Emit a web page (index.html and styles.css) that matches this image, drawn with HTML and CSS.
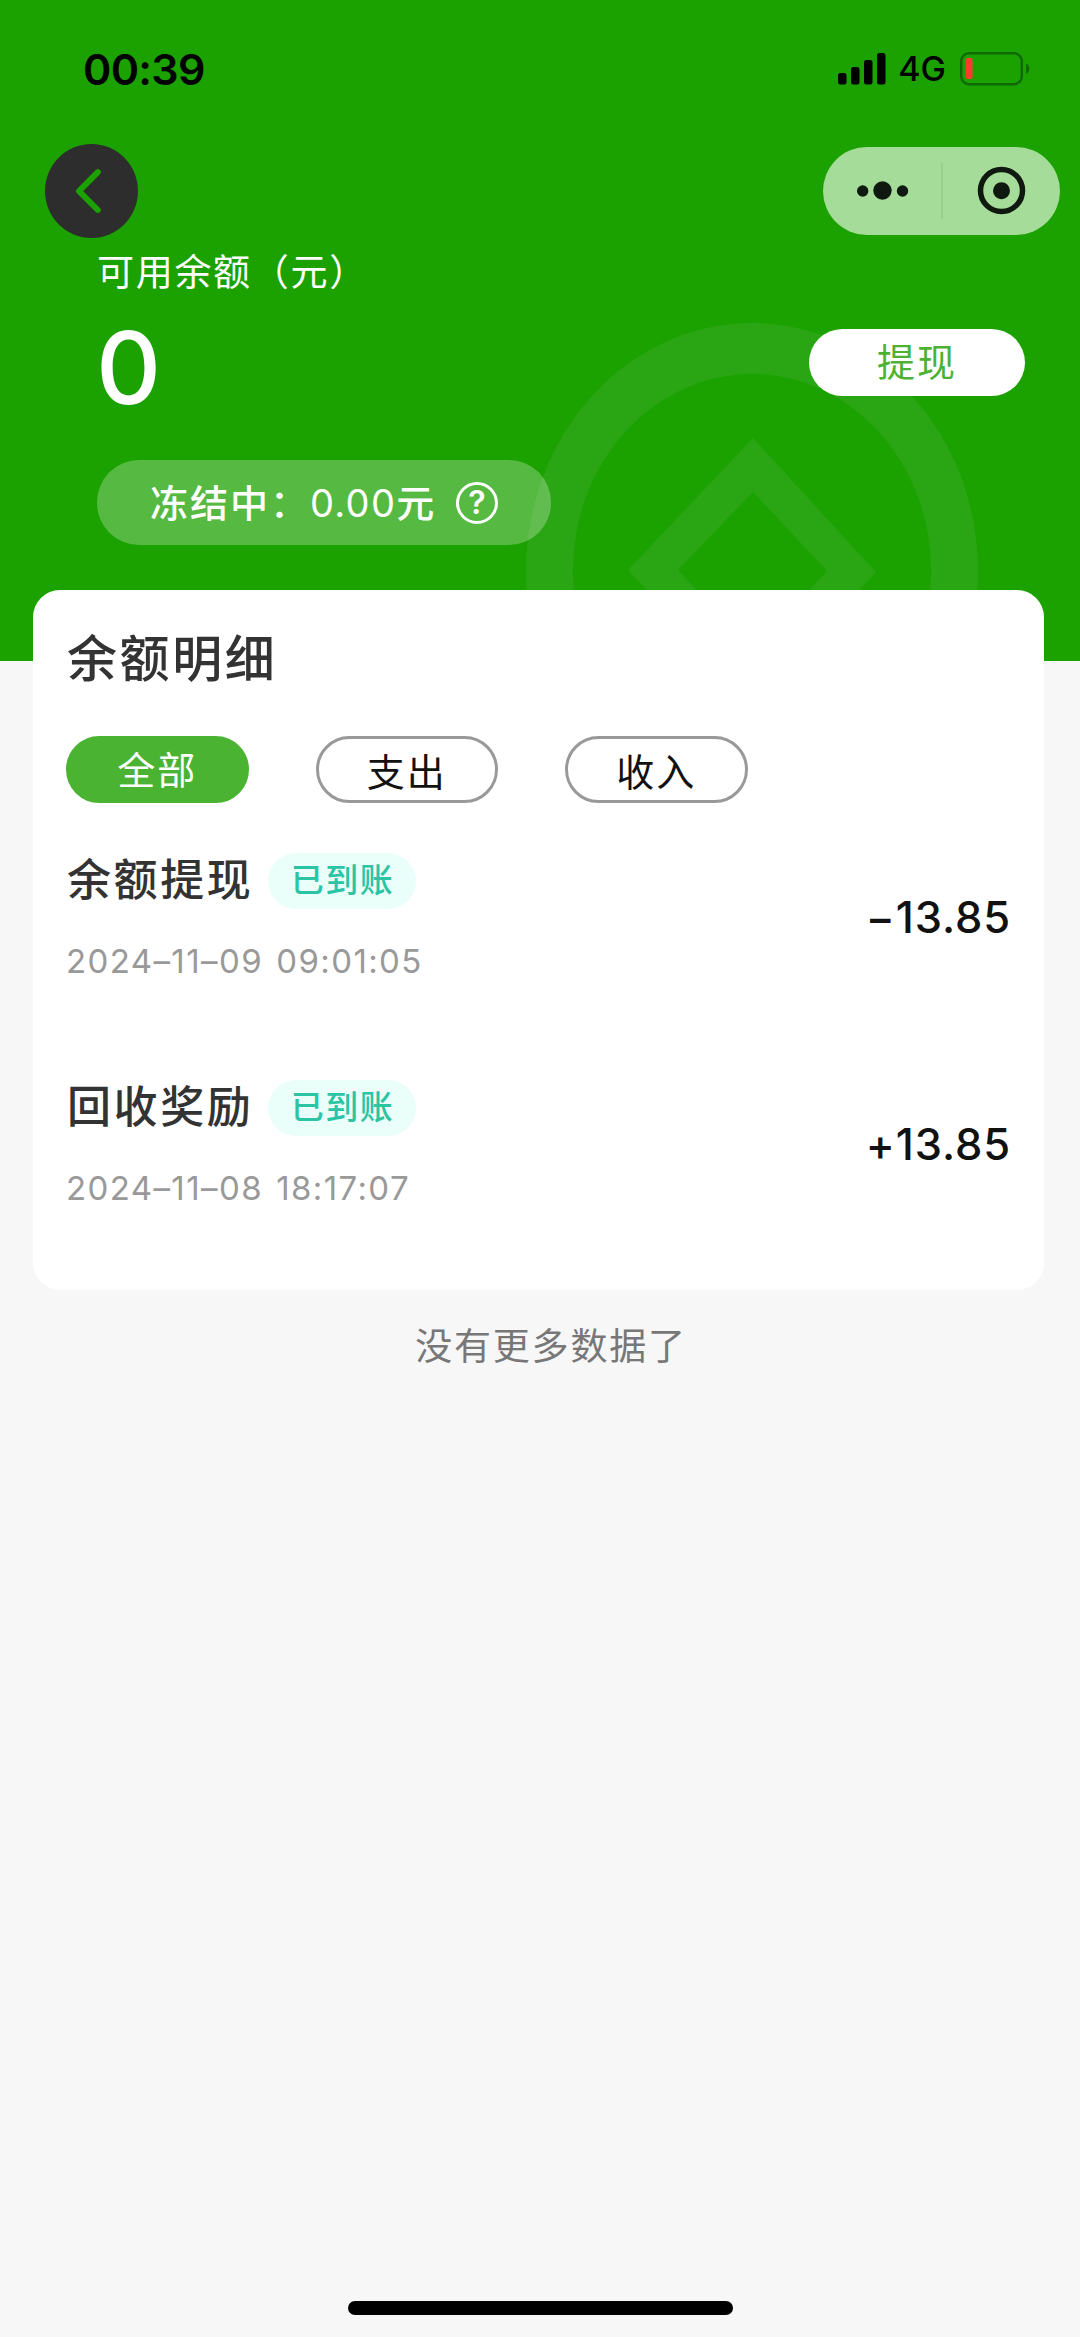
FILE: index.html
```html
<!DOCTYPE html>
<html lang="zh-CN">
<head>
<meta charset="utf-8">
<title>余额明细</title>
<link rel="stylesheet" href="styles.css">
</head>
<body>
<div class="screen">
  <header class="hero">
    <svg class="hero-coin" viewBox="0 0 454 339" aria-hidden="true">
      <path fill-rule="evenodd" d="M1 249a226 248 0 1 1 452 0a226 248 0 1 1 -452 0ZM48 249a179 197 0 1 0 358 0a179 197 0 1 0 -358 0Z"/>
      <path fill-rule="evenodd" d="M228 116L351 250L228 383L103 248ZM228 170L302 249L228 328L153 248Z"/>
    </svg>
    <div class="status-bar">
      <span class="clock">00:39</span>
      <div class="status-icons">
        <svg class="signal" width="48" height="32" viewBox="0 0 48 32" aria-hidden="true">
          <rect x="0" y="20" width="8.5" height="11.5" rx="2.5"/>
          <rect x="13" y="14" width="8.5" height="17.5" rx="2.5"/>
          <rect x="26" y="7" width="8.5" height="24.5" rx="2.5"/>
          <rect x="39" y="0" width="8.5" height="31.5" rx="2.5"/>
        </svg>
        <span class="network">4G</span>
        <svg class="battery" width="70" height="34" viewBox="0 0 70 34" aria-hidden="true">
          <rect class="battery-shell" x="1.2" y="1.2" width="60.6" height="31" rx="8"/>
          <rect class="battery-level" x="5.5" y="6" width="7" height="21" rx="2"/>
          <path class="battery-cap" d="M66 11.5C70.5 13.5 70.5 20 66 22Z"/>
        </svg>
      </div>
    </div>
    <div class="nav-bar">
      <div class="back">
        <svg width="93" height="94" viewBox="0 0 93 94" aria-hidden="true"><path d="M52.8 28.2L34 47.2L52.8 66"/></svg>
      </div>
      <div class="capsule">
        <svg width="237" height="88" viewBox="0 0 237 88" aria-hidden="true">
          <circle cx="39.7" cy="44" r="5.7"/>
          <circle cx="59.5" cy="43.5" r="9.2"/>
          <circle cx="79.5" cy="44" r="5.7"/>
          <path class="capsule-divider" d="M119 16V72"/>
          <circle class="capsule-ring" cx="178.5" cy="43.5" r="21"/>
          <circle cx="178.5" cy="43.7" r="8.5"/>
        </svg>
      </div>
    </div>
    <div class="balance-label">可用余额（元）</div>
    <div class="balance-row">
      <span class="balance">0</span>
      <span class="withdraw">提现</span>
    </div>
    <div class="frozen">
      <span>冻结中：<span class="frozen-amount">0.00</span>元</span>
      <span class="help">?</span>
    </div>
  </header>

  <main class="card">
    <h1 class="card-title">余额明细</h1>
    <nav class="tabs">
      <span class="tab tab-active">全部</span>
      <span class="tab">支出</span>
      <span class="tab">收入</span>
    </nav>
    <section class="record">
      <div class="record-info">
        <div class="record-head"><span class="record-name">余额提现</span><span class="badge">已到账</span></div>
        <div class="record-time">2024–11–09 09:01:05</div>
      </div>
      <span class="amount">−13.85</span>
    </section>
    <section class="record">
      <div class="record-info">
        <div class="record-head"><span class="record-name">回收奖励</span><span class="badge">已到账</span></div>
        <div class="record-time">2024–11–08 18:17:07</div>
      </div>
      <span class="amount">+13.85</span>
    </section>
  </main>
  <p class="end-note">没有更多数据了</p>
  <div class="home-indicator"></div>
</div>
</body>
</html>
```
FILE: styles.css
```css
* {
  box-sizing: border-box;
}

body {
  margin: 0;
  background: #f7f7f7;
  font-family: Inter, "Noto Sans CJK SC", sans-serif;
}

.screen {
  display: flex;
  flex-direction: column;
  width: 1080px;
  height: 2337px;
  overflow: hidden;
}

.hero {
  position: relative;
  height: 661px;
  flex: none;
  background: #1ba100;
  color: #fff;
}

.hero > * {
  position: relative;
}

.hero > .hero-coin {
  position: absolute;
  left: 525px;
  top: 322px;
  width: 454px;
  height: 339px;
  fill: #2aa614;
}

.status-bar {
  display: flex;
  justify-content: space-between;
  align-items: center;
  height: 138px;
  padding: 0 50px 0 83px;
  color: #000;
}

.clock {
  font-size: 43px;
  font-weight: 600;
  line-height: 52px;
  letter-spacing: -0.7px;
}

.status-icons {
  display: flex;
  align-items: center;
}

.network {
  margin: 0 14px 0 12px;
  font-size: 34px;
  font-weight: 500;
  line-height: 40px;
}

.battery-shell {
  fill: none;
  stroke: #0f6a04;
  stroke-width: 2.4;
}

.battery-level {
  fill: #ff3b2f;
}

.battery-cap {
  fill: #0f6a04;
}

.nav-bar {
  display: flex;
  justify-content: space-between;
  align-items: center;
  height: 106px;
  padding: 0 20px 0 45px;
}

.back {
  width: 93px;
  height: 94px;
  border-radius: 50%;
  background: #2d2d2d;
}

.back svg {
  display: block;
  fill: none;
  stroke: #1ba100;
  stroke-width: 6;
  stroke-linecap: round;
  stroke-linejoin: round;
}

.capsule {
  width: 237px;
  height: 88px;
  border-radius: 44px;
  background: #a5dc99;
  overflow: hidden;
}

.capsule svg {
  display: block;
  fill: #10190f;
}

.capsule .capsule-ring {
  fill: none;
  stroke: #10190f;
  stroke-width: 5.5;
}

.capsule-divider {
  stroke: #93cc87;
  stroke-width: 1.5;
}

.balance-label {
  height: 56px;
  padding-left: 97px;
  font-size: 37px;
  font-weight: 400;
  line-height: 58px;
  letter-spacing: 1.7px;
}

.balance-row {
  display: flex;
  justify-content: space-between;
  height: 160px;
  padding: 0 55px 0 96px;
}

.balance {
  font-size: 101px;
  font-weight: 500;
  line-height: 134px;
}

.withdraw {
  width: 216px;
  height: 67px;
  margin-top: 29px;
  border-radius: 34px;
  background: #fff;
  color: #4db233;
  font-size: 38px;
  line-height: 67px;
  letter-spacing: 2px;
  text-align: center;
}

.frozen {
  display: inline-flex;
  justify-content: space-between;
  align-items: center;
  width: 454px;
  height: 85px;
  margin-left: 97px;
  padding: 0 53px;
  border-radius: 42px;
  background: rgba(255, 255, 255, 0.26);
  font-size: 38px;
  font-weight: 500;
  line-height: 84px;
  letter-spacing: 2px;
  white-space: nowrap;
}

.frozen-amount {
  font-weight: 400;
  letter-spacing: 1.3px;
}

.help {
  width: 42px;
  height: 42px;
  border: 3.5px solid #fff;
  border-radius: 50%;
  font-size: 32px;
  font-weight: 600;
  line-height: 36px;
  letter-spacing: 0;
  text-align: center;
}

.card {
  position: relative;
  flex: none;
  width: 1011px;
  height: 700px;
  margin: -71px 0 0 33px;
  padding: 0 33px;
  border-radius: 27px;
  background: #fff;
}

.card-title {
  margin: 0;
  padding: 33px 0 0 1px;
  color: #333;
  font-size: 50px;
  font-weight: 500;
  line-height: 72px;
  letter-spacing: 2.6px;
}

.tabs {
  display: flex;
  gap: 67px;
  margin-top: 41px;
}

.tab {
  width: 182.5px;
  height: 67px;
  border: 3px solid #999;
  border-radius: 34px;
  color: #111;
  font-size: 38px;
  line-height: 67px;
  letter-spacing: 2px;
  text-align: center;
}

.tab-active {
  border-color: #4ab432;
  background: #4ab432;
  color: #fff;
  line-height: 62px;
}

.record {
  display: flex;
  justify-content: space-between;
  align-items: center;
  height: 227px;
}

.record-head {
  display: flex;
  align-items: center;
  gap: 15px;
  height: 56px;
  padding-left: 1px;
}

.record-name {
  color: #333;
  font-size: 44px;
  font-weight: 500;
  line-height: 56px;
  letter-spacing: 2.6px;
  margin-top: -2px;
}

.badge {
  width: 148px;
  height: 56px;
  border-radius: 28px;
  background: #eafffa;
  color: #2bc4a4;
  font-size: 33px;
  font-weight: 500;
  line-height: 54px;
  letter-spacing: 1.5px;
  text-align: center;
}

.record-time {
  margin-top: 32px;
  color: #999;
  font-size: 33px;
  line-height: 40px;
  letter-spacing: 1.4px;
  word-spacing: 2.5px;
}

.amount {
  color: #111;
  font-size: 43.5px;
  font-weight: 500;
  letter-spacing: 0.9px;
}

.end-note {
  margin: 29px 0 0;
  padding-left: 22px;
  color: #777;
  font-size: 37px;
  line-height: 56px;
  letter-spacing: 1.8px;
  text-align: center;
}

.home-indicator {
  width: 385px;
  height: 14px;
  margin: auto 0 22px 348px;
  border-radius: 7px;
  background: #000;
}
```
